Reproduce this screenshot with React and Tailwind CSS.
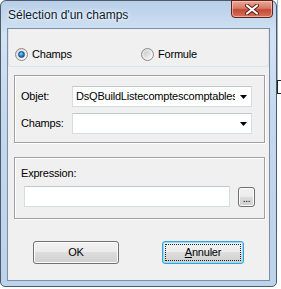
import React from 'react';

const ui = { fontFamily: '"Liberation Sans", Arial, sans-serif' };

function Radio({ checked }) {
    return (
        <span className="w-[13px] h-[13px] rounded-full border border-[#8a8a8a] flex items-center justify-center bg-[linear-gradient(135deg,#d9d9d9,#fbfbfb)] shrink-0">
            {checked ? (
                <span className="w-[7px] h-[7px] rounded-full bg-[radial-gradient(circle_at_40%_35%,#8fd8ff_0%,#2a8ad0_45%,#0f4f8c_100%)] border border-[#1a4d80]" />
            ) : (
                <span className="w-[7px] h-[7px] rounded-full bg-[linear-gradient(135deg,#c8c8c8,#f4f4f4)]" />
            )}
        </span>
    );
}

function Combo({ value }) {
    return (
        <div className="w-[180px] h-[21px] bg-white border border-[#d7dce2] border-t-[#c3c8cf] flex items-center">
            <div className="flex-1 overflow-hidden whitespace-nowrap pl-[3px] text-[11px] tracking-[-0.2px] text-black">
                {value}
            </div>
            <div className="w-[16px] h-full flex items-center justify-center shrink-0 bg-white">
                <svg width="7" height="4" viewBox="0 0 7 4">
                    <path d="M0 0H7L3.5 4Z" fill="#000" />
                </svg>
            </div>
        </div>
    );
}

export default function App() {
    return (
        <div className="w-[281px] h-[289px] bg-white flex overflow-hidden" style={ui}>
            {/* window */}
            <div className="w-[277px] h-[287px] shrink-0 border border-[#4d5a6a] rounded-t-[6px] rounded-b-[5px] flex flex-col bg-[linear-gradient(180deg,#b7cfe9_0%,#d3e3f4_12%,#c4d8ee_40%,#bcd3ec_100%)]">
                {/* title bar */}
                <div className="h-[27px] flex items-start shrink-0">
                    <div
                        className="pl-[7px] pt-[7px] text-[12px] leading-[15px] text-[#0b1a2b] whitespace-nowrap [text-shadow:0_0_6px_#fff,0_0_3px_#fff]"
                    >
                        Sélection d'un champs
                    </div>
                    <div className="flex-1" />
                    <div className="mr-[3px] -mt-[1px] w-[42px] h-[18px] rounded-b-[4px] border border-[#5e2219] bg-[linear-gradient(180deg,#e9a797_0%,#d77a66_45%,#c24a33_55%,#d5735c_100%)] shadow-[inset_0_0_0_1px_rgba(255,210,200,0.6)] flex items-center justify-center">
                        <svg width="14" height="11" viewBox="0 0 14 11">
                            <path d="M2 1.5L12 9.5M12 1.5L2 9.5" stroke="#5a1e14" strokeWidth="4" strokeLinecap="round" />
                            <path d="M2 1.5L12 9.5M12 1.5L2 9.5" stroke="#fff" strokeWidth="2.2" strokeLinecap="round" />
                        </svg>
                    </div>
                </div>

                {/* body row with side frames */}
                <div className="flex-1 flex px-[6px] pb-[6px]">
                    <div className="w-[264px] h-[253px] border border-[#7d8ea3] bg-[#f0f0f0] flex flex-col text-[11px] tracking-[-0.2px] text-black">
                        {/* radio panel */}
                        <div className="h-[38px] border-x border-b border-[#dde3ea] rounded-b-[3px] flex items-start pt-[19px] pl-[6px]">
                            <div className="w-[126px] flex items-center gap-[4px]">
                                <Radio checked />
                                <span className="leading-[13px]">Champs</span>
                            </div>
                            <div className="flex items-center gap-[4px]">
                                <Radio />
                                <span className="leading-[13px]">Formule</span>
                            </div>
                        </div>

                        {/* objet / champs group */}
                        <div className="mt-[8px] ml-[6px] w-[251px] h-[68px] border border-[#a0a0a0] shadow-[1px_1px_0_#fff,inset_1px_1px_0_#fff] flex flex-col pt-[10px] pl-[6px] gap-[6px]">
                            <div className="flex items-center">
                                <span className="w-[51px] leading-[13px]">Objet:</span>
                                <Combo value="DsQBuildListecomptescomptables" />
                            </div>
                            <div className="flex items-center">
                                <span className="w-[51px] leading-[13px]">Champs:</span>
                                <Combo value="" />
                            </div>
                        </div>

                        {/* expression group */}
                        <div className="mt-[14px] ml-[6px] w-[251px] h-[62px] border border-[#a0a0a0] shadow-[1px_1px_0_#fff,inset_1px_1px_0_#fff] flex flex-col pt-[9px] pl-[6px]">
                            <span className="leading-[13px]">Expression:</span>
                            <div className="mt-[6px] ml-[3px] flex items-center gap-[8px]">
                                <div className="w-[206px] h-[21px] bg-white border border-[#d7dce2] border-t-[#c3c8cf]" />
                                <div className="w-[17px] h-[20px] rounded-[3px] border border-[#707070] bg-[linear-gradient(180deg,#f2f2f2_0%,#ebebeb_50%,#dddddd_50%,#cfcfcf_100%)] shadow-[inset_0_0_0_1px_#fcfcfc] flex items-end justify-center pb-[2px] text-[10px] leading-[10px]">
                                    ...
                                </div>
                            </div>
                        </div>

                        {/* buttons */}
                        <div className="mt-[22px] ml-[25px] flex gap-[43px]">
                            <div className="w-[86px] h-[23px] rounded-[3px] border border-[#707070] bg-[linear-gradient(180deg,#f2f2f2_0%,#ebebeb_50%,#dddddd_50%,#cfcfcf_100%)] shadow-[inset_0_0_0_1px_#fcfcfc] flex items-center justify-center">
                                OK
                            </div>
                            <div className="w-[82px] h-[23px] rounded-[3px] border border-[#3c9fd8] bg-[linear-gradient(180deg,#f2f2f2_0%,#ebebeb_50%,#dddddd_50%,#cfcfcf_100%)] shadow-[inset_0_0_0_1px_#8fe0fb] flex items-center justify-center p-[2px]">
                                <div className="w-full h-full border border-dotted border-[#222] flex items-center justify-center">
                                    <span><span className="underline">A</span>nnuler</span>
                                </div>
                            </div>
                        </div>
                    </div>
                </div>
            </div>
            {/* background behind the window */}
            <div className="flex-1 flex flex-col">
                <div className="h-[80px] border-l border-[#9fb6cf]" />
                <div className="h-[14px] border-l border-t border-b border-[#222]" />
                <div className="flex-1" />
            </div>
        </div>
    );
}
